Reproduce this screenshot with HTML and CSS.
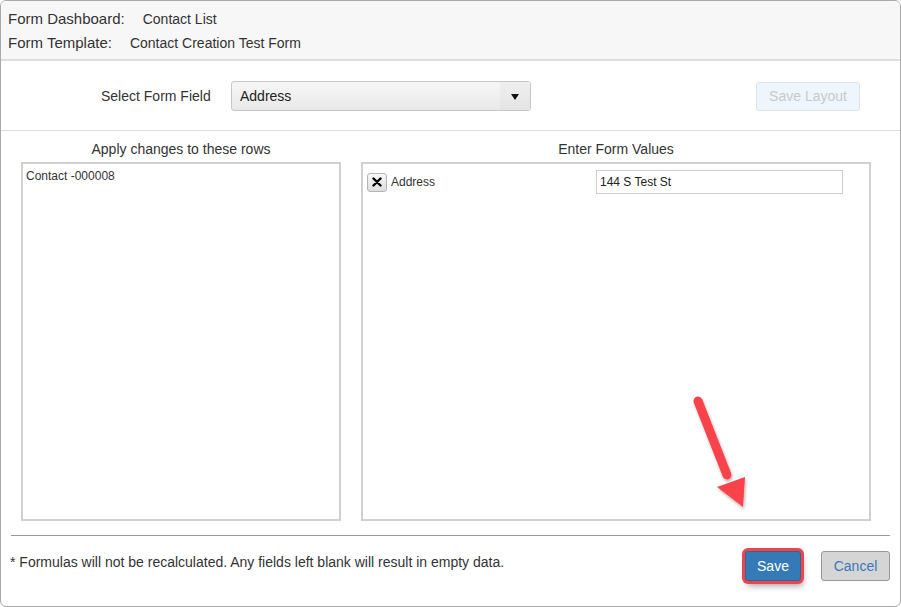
FILE: index.html
```html
<!DOCTYPE html>
<html lang="en">
<head>
    <meta charset="UTF-8">
    <title>Mass Update</title>
    <link rel="stylesheet" href="styles.css">
</head>
<body>
    <div class="dialog">
        <div class="header">
            <div class="header-line"><span class="header-label">Form Dashboard:</span>Contact List</div>
            <div class="header-line"><span class="header-label">Form Template:</span>Contact Creation Test Form</div>
        </div>

        <div class="field-row">
            <span class="field-label">Select Form Field</span>
            <div class="select">
                <span class="select-text">Address</span>
                <span class="select-arrow"></span>
            </div>
            <div class="spacer"></div>
            <button class="layout-button" disabled>Save Layout</button>
        </div>

        <div class="columns">
            <div class="column column-rows">
                <div class="column-title">Apply changes to these rows</div>
                <div class="box">
                    <div class="row-item">Contact -000008</div>
                </div>
            </div>
            <div class="column column-values">
                <div class="column-title">Enter Form Values</div>
                <div class="box">
                    <div class="value-row">
                        <span class="remove-button">
                            <svg width="10" height="10" viewBox="0 0 10 10"><path d="M1.5 1.5 L8.5 8.5 M8.5 1.5 L1.5 8.5" stroke="#000" stroke-width="2.4" stroke-linecap="round"/></svg>
                        </span>
                        <span class="value-label">Address</span>
                        <input class="value-input" type="text" value="144 S Test St">
                    </div>
                </div>
            </div>
        </div>

        <div class="footer">
            <div class="note">* Formulas will not be recalculated. Any fields left blank will result in empty data.</div>
            <button class="button button-save">Save</button>
            <button class="button button-cancel">Cancel</button>
        </div>

        <!-- annotation arrow -->
        <svg class="arrow" width="80" height="130" viewBox="0 0 80 130">
            <defs>
                <filter id="arrow-shadow" x="-30%" y="-30%" width="160%" height="160%">
                    <feDropShadow dx="1" dy="2" stdDeviation="1.5" flood-color="#000" flood-opacity="0.3"/>
                </filter>
            </defs>
            <g filter="url(#arrow-shadow)" fill="#f9434a" stroke="#f9434a">
                <line x1="17" y1="20" x2="46" y2="94" stroke-width="9" stroke-linecap="round"/>
                <polygon points="36,106 64,96 62,126" stroke="none"/>
            </g>
        </svg>
    </div>
</body>
</html>
```

FILE: styles.css
```css
body {
    margin: 0;
    padding: 0;
    background: #ffffff;
    font-family: "Liberation Sans", Arial, sans-serif;
    color: #333;
}

.dialog {
    position: relative;
    width: 901px;
    height: 607px;
    box-sizing: border-box;
    border: 1px solid #a9a9a9;
    border-radius: 6px;
    background: #fff;
    overflow: hidden;
}

.header {
    height: 52px;
    padding: 6px 7px 0;
    background: #f7f7f7;
    border-bottom: 2px solid #dedede;
    font-size: 14px;
}

.header-line {
    line-height: 23px;
}

.header-label {
    font-size: 15px;
    margin-right: 18px;
}

.field-row {
    display: flex;
    align-items: center;
    padding: 20px 40px 19px 100px;
    border-bottom: 1px solid #ddd;
}

.field-label {
    font-size: 14px;
    width: 130px;
}

.select {
    display: flex;
    align-items: center;
    width: 300px;
    height: 30px;
    box-sizing: border-box;
    border: 1px solid #c6c6c6;
    border-radius: 3px;
    background: linear-gradient(#f6f6f6, #e9e9e9);
}

.select-text {
    flex: 1;
    padding-left: 8px;
    font-size: 14px;
    color: #222;
}

.select-arrow {
    width: 30px;
    height: 28px;
    position: relative;
    background: linear-gradient(#efefef, #e4e4e4);
}

.select-arrow::after {
    content: "";
    position: absolute;
    left: 11px;
    top: 12px;
    border-left: 4px solid transparent;
    border-right: 4px solid transparent;
    border-top: 6px solid #111;
}

.spacer {
    flex: 1;
}

.layout-button {
    width: 104px;
    height: 29px;
    border: 1px solid #dbe4ec;
    border-radius: 3px;
    background: #eef6fd;
    color: #c9c9c9;
    font-family: inherit;
    font-size: 14px;
    padding: 0;
}

.columns {
    display: flex;
    gap: 20px;
    padding: 8px 28px 0 20px;
}

.column-title {
    text-align: center;
    font-size: 14px;
    line-height: 20px;
    margin-bottom: 3px;
}

.column-rows {
    width: 320px;
}

.column-values {
    width: 510px;
}

.box {
    height: 359px;
    box-sizing: border-box;
    border: 2px solid #d0d0d0;
}

.row-item {
    font-size: 12px;
    padding: 5px 3px;
}

.value-row {
    display: flex;
    align-items: center;
    padding: 6px 4px 0;
}

.remove-button {
    display: flex;
    align-items: center;
    justify-content: center;
    width: 18px;
    height: 17px;
    border: 1px solid #b5b5b5;
    border-radius: 3px;
    background: linear-gradient(#f7f7f7, #dedede);
}

.value-label {
    font-size: 12px;
    width: 205px;
    margin-left: 4px;
}

.value-input {
    width: 247px;
    height: 24px;
    box-sizing: border-box;
    border: 1px solid #cfcfcf;
    padding: 0 3px;
    font-family: inherit;
    font-size: 12px;
    color: #222;
    outline: none;
}

.footer {
    display: flex;
    align-items: center;
    margin: 14px 10px 0;
    padding-top: 15px;
    border-top: 1px solid #9a9a9a;
}

.note {
    flex: 1;
    font-size: 14px;
    margin-left: -1px;
    margin-bottom: 8px;
}

.button {
    height: 30px;
    border-radius: 3px;
    font-family: inherit;
    font-size: 14px;
    padding: 0;
}

.button-save {
    width: 56px;
    border: 1px solid #2a689f;
    background: #337ab7;
    color: #fff;
    box-shadow: 0 0 0 3px #f0434a, 2px 5px 6px rgba(0, 0, 0, 0.35);
}

.button-cancel {
    width: 69px;
    margin-left: 20px;
    border: 1px solid #999;
    background: #d5d5d5;
    color: #3a79b5;
}

.arrow {
    position: absolute;
    left: 680px;
    top: 380px;
}
```
